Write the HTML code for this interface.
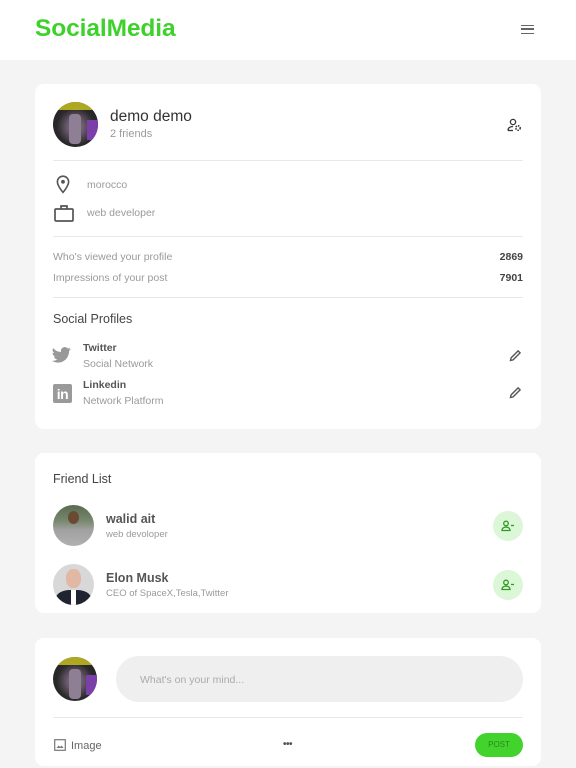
<!DOCTYPE html>
<html><head><meta charset="utf-8"><style>
*{margin:0;padding:0;box-sizing:border-box}
body{width:576px;height:768px;background:#f4f4f4;font-family:"Liberation Sans",sans-serif;position:relative;overflow:hidden;color:#333}
.abs{position:absolute}
.hdr{left:0;top:0;width:576px;height:60px;background:#fff}
.logo{left:35px;top:15px;font-size:24.5px;font-weight:bold;color:#3fd12b;letter-spacing:-0.1px}
.card{background:#fff;border-radius:9px;left:35px;width:506px}
.hr{height:1px;background:#e8e8e8;left:53px;width:470px}
.g{color:#9a9a9a;font-size:10.5px}
.av{border-radius:50%;overflow:hidden}
.av1{background:radial-gradient(circle at 50% 55%,#8a7a8c 0,#6b5a6e 25%,#2a2a2a 55%,#1b1b1b 100%)}
.btn{width:30px;height:30px;border-radius:50%;background:#dcf6d8;left:493px}
</style></head><body>
<div class="abs hdr"></div>
<div class="abs logo">SocialMedia</div>
<div class="abs" style="left:521px;top:25px;width:13px;height:9px;border-top:1.5px solid #666;border-bottom:1.5px solid #666"><div style="margin-top:2.3px;height:1.5px;background:#666"></div></div>

<div class="abs card" style="top:84px;height:345px"></div>
<div class="abs av av1" style="left:53px;top:102px;width:45px;height:45px"><div style="position:absolute;left:0;top:0;width:45px;height:8px;background:#e8e020;opacity:.7"></div><div style="position:absolute;left:16px;top:12px;width:12px;height:30px;background:#8e7f94;border-radius:4px"></div><div style="position:absolute;left:34px;top:18px;width:11px;height:20px;background:#7a3fa8"></div></div>
<div class="abs" style="left:110px;top:108px;font-size:15.5px;color:#333">demo demo</div>
<div class="abs g" style="left:110px;top:128px;font-size:11px">2 friends</div>
<svg class="abs" style="left:507px;top:118px" width="15" height="14" viewBox="0 0 15 14"><circle cx="6" cy="4" r="2.6" fill="none" stroke="#333" stroke-width="1.3"/><path d="M1 12.5c0-3 2.5-4 5-4" fill="none" stroke="#333" stroke-width="1.3"/><circle cx="11" cy="10" r="2.2" fill="none" stroke="#333" stroke-width="1.5" stroke-dasharray="1.5 1"/><path d="M1 12.5h5" stroke="#333" stroke-width="1.3"/></svg>
<div class="abs hr" style="top:160px"></div>
<svg class="abs" style="left:56px;top:175px" width="14" height="19" viewBox="0 0 14 19"><path d="M7 1.2a5.6 5.6 0 0 0-5.6 5.6c0 4.2 5.6 10.6 5.6 10.6s5.6-6.4 5.6-10.6A5.6 5.6 0 0 0 7 1.2z" fill="none" stroke="#555" stroke-width="1.6"/><circle cx="7" cy="6.8" r="1.9" fill="#555"/></svg>
<div class="abs g" style="left:87px;top:179px">morocco</div>
<svg class="abs" style="left:54px;top:204px" width="20" height="18" viewBox="0 0 20 18"><rect x="1" y="5" width="18" height="12" rx="1" fill="none" stroke="#555" stroke-width="1.7"/><path d="M7 5V2h6v3" fill="none" stroke="#555" stroke-width="1.7"/></svg>
<div class="abs g" style="left:87px;top:207px">web developer</div>
<div class="abs hr" style="top:236px"></div>
<div class="abs g" style="left:53px;top:251px">Who's viewed your profile</div>
<div class="abs" style="left:470px;top:251px;width:53px;text-align:right;font-size:10.5px;font-weight:bold;color:#444">2869</div>
<div class="abs g" style="left:53px;top:272px">Impressions of your post</div>
<div class="abs" style="left:470px;top:272px;width:53px;text-align:right;font-size:10.5px;font-weight:bold;color:#444">7901</div>
<div class="abs hr" style="top:297px"></div>
<div class="abs" style="left:53px;top:312px;font-size:12.5px;color:#444">Social Profiles</div>
<svg class="abs" style="left:52px;top:347px" width="19" height="16" viewBox="0 0 24 20"><path d="M23.6 2.4c-.9.4-1.8.6-2.8.8 1-.6 1.8-1.6 2.1-2.7-.9.6-2 1-3.1 1.2a4.9 4.9 0 0 0-8.4 4.5C7.4 6 3.8 4.1 1.4 1.1a4.9 4.9 0 0 0 1.5 6.6c-.8 0-1.6-.3-2.2-.6 0 2.4 1.7 4.4 3.9 4.8-.7.2-1.5.2-2.2.1.6 2 2.4 3.4 4.6 3.4A9.9 9.9 0 0 1 0 17.4 14 14 0 0 0 7.5 19.6c9 0 14-7.5 14-14v-.6c1-.7 1.8-1.6 2.1-2.6z" fill="#999"/></svg>
<div class="abs" style="left:83px;top:342px;font-size:10.5px;color:#555;font-weight:bold">Twitter</div>
<div class="abs g" style="left:83px;top:358px">Social Network</div>
<svg class="abs" style="left:509px;top:349px" width="13" height="13" viewBox="0 0 13 13"><path d="M1.5 11.5l.6-2.6 7-7 2 2-7 7z" fill="none" stroke="#555" stroke-width="1.4"/></svg>
<div class="abs" style="left:53px;top:384px;width:19px;height:19px;background:#9a9a9a;border-radius:2px;color:#fff;font-weight:bold;font-size:14px;line-height:20px;text-align:center;letter-spacing:-0.5px">in</div>
<div class="abs" style="left:83px;top:379px;font-size:10.5px;color:#555;font-weight:bold">Linkedin</div>
<div class="abs g" style="left:83px;top:395px">Network Platform</div>
<svg class="abs" style="left:509px;top:386px" width="13" height="13" viewBox="0 0 13 13"><path d="M1.5 11.5l.6-2.6 7-7 2 2-7 7z" fill="none" stroke="#555" stroke-width="1.4"/></svg>

<div class="abs card" style="top:453px;height:160px"></div>
<div class="abs" style="left:53px;top:472px;font-size:12.5px;color:#444">Friend List</div>
<div class="abs av" style="left:53px;top:505px;width:41px;height:41px;background:linear-gradient(180deg,#5a6a50 0,#7a8a70 40%,#a0a0a0 60%,#b0b0b0 100%)"><div style="position:absolute;left:15px;top:6px;width:11px;height:13px;background:#6b4a33;border-radius:50%"></div></div>
<div class="abs" style="left:106px;top:512px;font-size:12.5px;color:#555;font-weight:bold">walid ait</div>
<div class="abs g" style="left:106px;top:529px;font-size:9.5px">web devoloper</div>
<div class="abs btn" style="top:511px"></div>
<div class="abs av" style="left:53px;top:564px;width:41px;height:41px;background:#d8d8d8"><div style="position:absolute;left:13px;top:5px;width:15px;height:19px;background:#e0b8a4;border-radius:45%"></div><div style="position:absolute;left:3px;top:26px;width:35px;height:20px;background:#1f2430;border-radius:40% 40% 0 0"></div><div style="position:absolute;left:18px;top:26px;width:5px;height:15px;background:#fff"></div></div>
<div class="abs" style="left:106px;top:571px;font-size:12.5px;color:#555;font-weight:bold">Elon Musk</div>
<div class="abs g" style="left:106px;top:588px;font-size:9.5px">CEO of SpaceX,Tesla,Twitter</div>
<div class="abs btn" style="top:570px"></div>
<svg class="abs" style="left:501px;top:520px" width="14" height="12" viewBox="0 0 14 12"><circle cx="5" cy="3.5" r="2.3" fill="none" stroke="#2f9a22" stroke-width="1.3"/><path d="M1 10.5c0-2.5 2-3.4 4-3.4s4 .9 4 3.4z" fill="none" stroke="#2f9a22" stroke-width="1.3"/><path d="M10 5.5h3" stroke="#2f9a22" stroke-width="1.3"/></svg>
<svg class="abs" style="left:501px;top:579px" width="14" height="12" viewBox="0 0 14 12"><circle cx="5" cy="3.5" r="2.3" fill="none" stroke="#2f9a22" stroke-width="1.3"/><path d="M1 10.5c0-2.5 2-3.4 4-3.4s4 .9 4 3.4z" fill="none" stroke="#2f9a22" stroke-width="1.3"/><path d="M10 5.5h3" stroke="#2f9a22" stroke-width="1.3"/></svg>

<div class="abs card" style="top:638px;height:128px"></div>
<div class="abs av av1" style="left:53px;top:657px;width:44px;height:44px"><div style="position:absolute;left:0;top:0;width:44px;height:8px;background:#e8e020;opacity:.7"></div><div style="position:absolute;left:16px;top:12px;width:12px;height:30px;background:#8e7f94;border-radius:4px"></div><div style="position:absolute;left:33px;top:18px;width:11px;height:20px;background:#7a3fa8"></div></div>
<div class="abs" style="left:116px;top:656px;width:407px;height:46px;border-radius:23px;background:#efefef"></div>
<div class="abs" style="left:140px;top:674px;font-size:10.5px;color:#aaa">What's on your mind...</div>
<div class="abs hr" style="top:717px"></div>
<svg class="abs" style="left:54px;top:739px" width="12" height="12" viewBox="0 0 12 12"><rect x=".7" y=".7" width="10.6" height="10.6" fill="none" stroke="#777" stroke-width="1.2"/><path d="M2.5 9l2.2-2.5 1.5 1.5 1.5-1.5 1.8 2.5z" fill="#777"/></svg>
<div class="abs" style="left:71px;top:740px;font-size:11px;color:#666">Image</div>
<div class="abs" style="left:283px;top:739px;font-size:10px;color:#555;letter-spacing:-0.5px;font-weight:bold">•••</div>
<div class="abs" style="left:475px;top:733px;width:48px;height:24px;border-radius:12px;background:#42d42c;color:#2a8a1c;font-size:8px;text-align:center;line-height:24px">POST</div>
</body></html>
